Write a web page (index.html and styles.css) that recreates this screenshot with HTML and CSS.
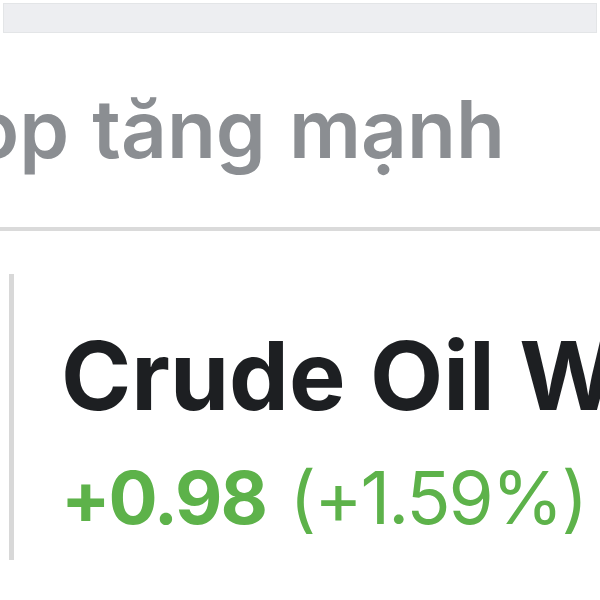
FILE: index.html
```html
<!DOCTYPE html>
<html lang="vi">
<head>
<meta charset="utf-8">
<link rel="stylesheet" href="styles.css">
</head>
<body>
<div class="search"></div>
<div class="header">
  <h1 class="title">Top tăng mạnh</h1>
</div>
<div class="divider"></div>
<div class="card">
  <div class="name">Crude Oil WTI</div>
  <div class="change"><span class="abs">+0.98</span> <span class="pct">(+1.59%)</span></div>
</div>
</body>
</html>
```
FILE: styles.css
```css
html, body {
  margin: 0;
  padding: 0;
  background: #ffffff;
  overflow: hidden;
  width: 600px;
  height: 600px;
}
body {
  font-family: Inter, "Noto Sans", sans-serif;
}
.search {
  height: 28px;
  margin: 3px 3px 0 3px;
  background: #edeef1;
  border: 1px solid #e3e5e7;
}
.header {
  padding: 46px 0 48px 0;
  overflow: hidden;
  white-space: nowrap;
}
.title {
  margin: 0 0 0 -76px;
  font-size: 80px;
  line-height: 100px;
  font-weight: 600;
  color: #8b8e92;
  word-spacing: 3px;
}
.divider {
  height: 4px;
  background: #dadada;
}
.card {
  margin: 43px 0 0 9px;
  border-left: 5px solid #d8d8d8;
  padding: 47px 0 20px 47px;
  white-space: nowrap;
  overflow: hidden;
}
.name {
  font-size: 95px;
  line-height: 110px;
  font-weight: 700;
  color: #1d1f22;
  word-spacing: 2px;
}
.change {
  margin-top: 25px;
  font-size: 73px;
  line-height: 84px;
  color: #5db24a;
  word-spacing: 3px;
}
.abs {
  font-weight: 700;
  letter-spacing: -2px;
}
.pct {
  font-weight: 400;
  letter-spacing: -2px;
}
```
